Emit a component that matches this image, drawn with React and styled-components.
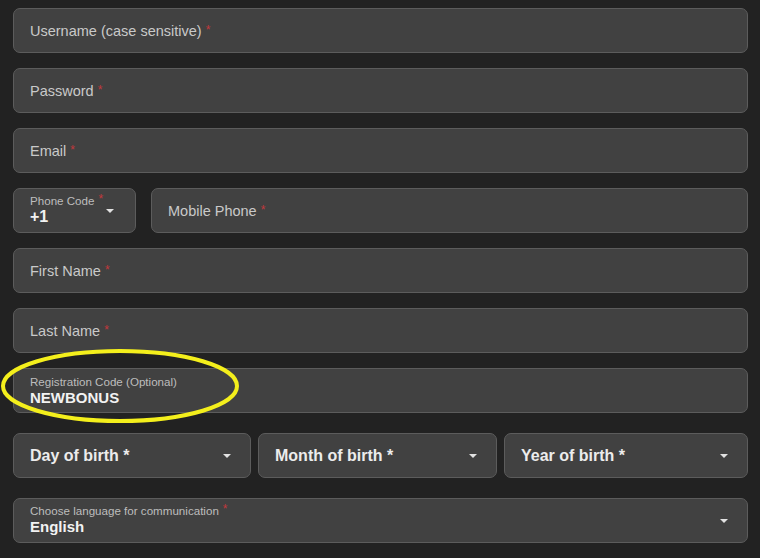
import React from "react";
import styled, { createGlobalStyle } from "styled-components";

const GlobalStyle = createGlobalStyle`
  body {
    margin: 0;
    background: #222222;
    font-family: "Liberation Sans", Arial, sans-serif;
  }
`;

const Page = styled.div`
  position: relative;
  width: 760px;
  min-height: 558px;
  box-sizing: border-box;
  padding: 8px 12px 0 13px;
  display: flex;
  flex-direction: column;
  gap: 15px;
`;

const Row = styled.div`
  display: flex;
  gap: ${(p) => p.$gap || 15}px;
  margin-top: ${(p) => p.$top || 0}px;
`;

const Field = styled.div`
  box-sizing: border-box;
  height: 45px;
  min-width: 0;
  flex: ${(p) => (p.$width ? `0 0 ${p.$width}px` : "1 1 0")};
  background: #414141;
  border: 1px solid #5c5c5c;
  border-radius: 7px;
  padding: 0 17px 0 16px;
  display: flex;
  align-items: center;
  justify-content: space-between;
`;

const Placeholder = styled.span`
  color: #c9c9c9;
  font-size: 14.5px;
`;

const Req = styled.span`
  color: #c2383c;
  font-size: 12px;
  margin-left: 4px;
  vertical-align: 2px;
`;

const Stack = styled.div`
  display: flex;
  flex-direction: column;
  margin-top: ${(p) => p.$shift || 0}px;
`;

const SmallLabel = styled.span`
  color: #bdbdbd;
  font-size: 11.6px;
  line-height: 14px;
`;

const Value = styled.span`
  color: #f2f2f2;
  font-size: ${(p) => p.$size || 15}px;
  font-weight: bold;
  line-height: 18px;
`;

const SelectText = styled.span`
  color: #ececec;
  font-size: 16px;
  font-weight: bold;
`;

const Caret = styled.span`
  width: 0;
  height: 0;
  border-left: 4px solid transparent;
  border-right: 4px solid transparent;
  border-top: 4px solid #e2e2e2;
  margin-right: ${(p) => p.$right || 0}px;
`;

const Highlight = styled.svg`
  position: absolute;
  left: 0;
  top: 346px;
  pointer-events: none;
`;

const Input = ({ label }) => (
  <Field>
    <Placeholder>
      {label}
      <Req>*</Req>
    </Placeholder>
  </Field>
);

export default function App() {
  return (
    <>
      <GlobalStyle />
      <Page>
        <Row>
          <Input label="Username (case sensitive)" />
        </Row>
        <Row>
          <Input label="Password" />
        </Row>
        <Row>
          <Input label="Email" />
        </Row>
        <Row>
          <Field $width={123}>
            <Stack $shift={-3}>
              <SmallLabel>
                Phone Code<Req>*</Req>
              </SmallLabel>
              <Value $size={16}>+1</Value>
            </Stack>
            <Caret $right={4} />
          </Field>
          <Input label="Mobile Phone" />
        </Row>
        <Row>
          <Input label="First Name" />
        </Row>
        <Row>
          <Input label="Last Name" />
        </Row>
        <Row>
          <Field>
            <Stack>
              <SmallLabel>Registration Code (Optional)</SmallLabel>
              <Value>NEWBONUS</Value>
            </Stack>
          </Field>
        </Row>
        <Row $gap={7} $top={5}>
          <Field $width={238}>
            <SelectText>Day of birth *</SelectText>
            <Caret $right={2} />
          </Field>
          <Field $width={239}>
            <SelectText>Month of birth *</SelectText>
            <Caret $right={2} />
          </Field>
          <Field>
            <SelectText>Year of birth *</SelectText>
            <Caret $right={2} />
          </Field>
        </Row>
        <Row $top={5}>
          <Field>
            <Stack $shift={-3}>
              <SmallLabel>
                Choose language for communication<Req>*</Req>
              </SmallLabel>
              <Value>English</Value>
            </Stack>
            <Caret $right={2} />
          </Field>
        </Row>
        <Highlight width="250" height="80" viewBox="0 0 250 80">
          <ellipse
            cx="120"
            cy="40"
            rx="117"
            ry="35"
            fill="none"
            stroke="#f4ef1c"
            strokeWidth="4"
          />
        </Highlight>
      </Page>
    </>
  );
}
